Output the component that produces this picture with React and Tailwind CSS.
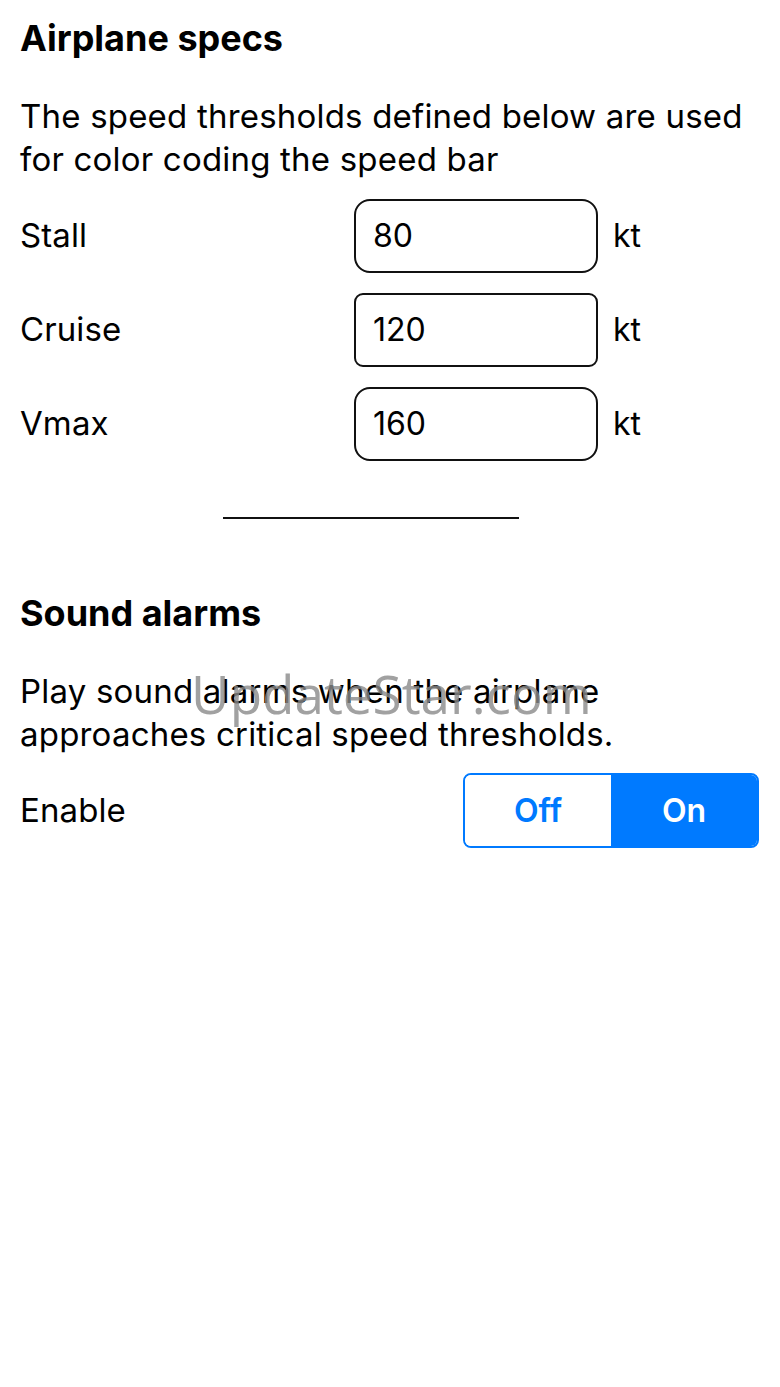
import React from 'react';

const specs = [
  { label: 'Stall', value: '80', radius: 'rounded-[16px]' },
  { label: 'Cruise', value: '120', radius: 'rounded-[9px]' },
  { label: 'Vmax', value: '160', radius: 'rounded-[16px]' },
];

const App = () => {
  return (
    <div
      className="relative min-h-[1387px] w-[780px] bg-white text-black"
      style={{ fontFamily: 'Inter, "Noto Sans", sans-serif' }}
    >
      <div className="px-5 pt-[14px]">
        {/* Airplane specs */}
        <h1 className="text-[36px] font-bold leading-[48px] tracking-[0px]">Airplane specs</h1>
        <p className="mt-[33px] text-[33px] leading-[43px] tracking-[0.2px]">
          The speed thresholds defined below are used for color coding the speed bar
        </p>

        <div className="mt-[18px] flex flex-col gap-[20px]">
          {specs.map((s) => (
            <div key={s.label} className="flex items-center">
              <span className="w-[334px] text-[33px] tracking-[0.1px]">{s.label}</span>
              <div
                className={`flex h-[74px] w-[244px] items-center border-2 border-[#111] px-[17px] text-[32px] ${s.radius}`}
              >
                {s.value}
              </div>
              <span className="ml-[15px] text-[32px]">kt</span>
            </div>
          ))}
        </div>

        <div className="mt-[56px] ml-[203px] h-[2px] w-[296px] bg-[#111]" />

        {/* Sound alarms */}
        <h2 className="mt-[70px] text-[36px] font-bold leading-[48px] tracking-[0px]">Sound alarms</h2>
        <p className="mt-[33px] w-[680px] text-[33px] leading-[43px] tracking-[0.2px]">
          Play sound alarms when the airplane approaches critical speed thresholds.
        </p>

        <div className="mt-[17px] flex items-center justify-between">
          <span className="text-[33px] tracking-[0.1px]">Enable</span>
          <div className="mr-[1px] flex h-[75px] w-[296px] overflow-hidden rounded-[8px] border-2 border-[#007aff] text-[32px] font-semibold">
            <div className="flex flex-1 items-center justify-center bg-white text-[#007aff]">Off</div>
            <div className="flex flex-1 items-center justify-center bg-[#007aff] text-white">On</div>
          </div>
        </div>
      </div>

      {/* watermark */}
      <div
        className="pointer-events-none absolute left-[191px] top-[667px] text-[53px] leading-none text-[#8a8a8a] opacity-80"
        style={{ fontFamily: '"Open Sans", sans-serif' }}
      >
        UpdateStar.com
      </div>
    </div>
  );
};

export default App;
